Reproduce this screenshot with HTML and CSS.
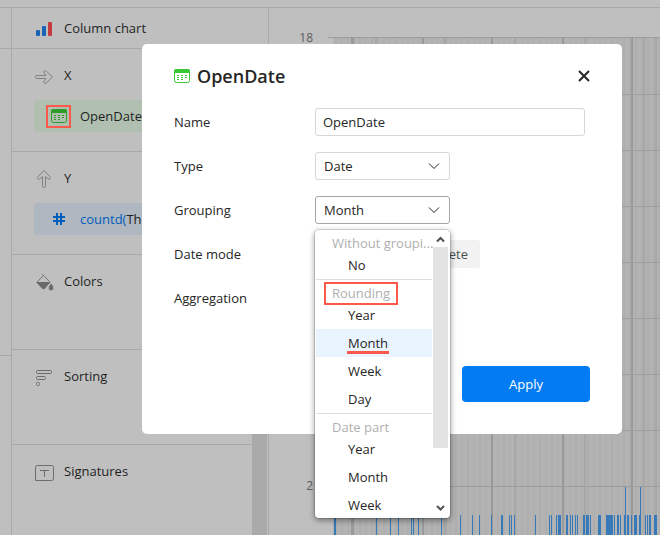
FILE: index.html
```html
<!DOCTYPE html>
<html lang="en">
<head>
<meta charset="utf-8">
<title>Field settings</title>
<link rel="stylesheet" href="styles.css">
</head>
<body>
<div class="workspace">
  <div class="rail"><div class="rail-top"></div><div class="rail-body"></div></div>
  <aside class="sidebar">
    <div class="sections">
      <div class="chart-type">
        <svg class="icon" width="20" height="20" viewBox="0 0 20 20"><rect x="2" y="12" width="4" height="6" rx="1" fill="#1a63b5"/><rect x="8" y="8" width="4" height="10" rx="1" fill="#1a63b5"/><rect x="14" y="4" width="4" height="14" rx="1" fill="#c63b40"/></svg>
        <span>Column chart</span>
      </div>
      <section class="section">
        <div class="section-head">
          <svg class="icon" width="20" height="20" viewBox="0 0 20 20" fill="none" stroke="#808080"><path d="M2.500 13.500q-1-.2-1-1.500t1-1.500h9.500L10 7.800q-.6-1.300.3-1.900t1.900.2L18.500 12l-6.300 6q-1 .8-1.900.2t-.3-1.900l2-2.800z"/></svg>
          <span>X</span>
        </div>
        <div class="field field-date">
          <span class="mark-box"><svg width="16" height="14" viewBox="0 0 16 14"><rect x=".5" y=".5" width="15" height="13" rx="2" fill="none" stroke="#2d9b28"/><path fill="#2d9b28" d="M0 4V2q0-2 2-2h12q2 0 2 2v2zM3 8h2v1H3zm0-2h2v1H3zm4 0h2v1H7zm4 0h2v1h-2zM7 8h2v1H7zm4 0h2v1h-2zM3 10h2v1H3zm4 0h2v1H7z"/></svg></span>
          <span>OpenDate</span>
        </div>
      </section>
      <section class="section">
        <div class="section-head">
          <svg class="icon" width="20" height="20" viewBox="0 0 20 20" fill="none" stroke="#808080"><path d="M8.500 18.500q.2 1 1.500 1t1.500-1V8.500L14.200 11q1.300.6 1.900-.3t-.2-1.900L10 2.500l-6 6.300q-.8 1-.2 1.900t1.900.3l2.800-2.500z"/></svg>
          <span>Y</span>
        </div>
        <div class="field field-measure">
          <span class="hash"><svg width="12" height="12" viewBox="0 0 12 12"><path fill="none" stroke="#005dbb" stroke-width="2" d="M4 0v12M8 0v12M0 4h12M0 8h12"/></svg></span>
          <span><span class="fn">countd(</span>The</span>
        </div>
      </section>
      <section class="section">
        <div class="section-head">
          <svg class="icon" width="20" height="20" viewBox="0 0 20 20"><path d="M8 3l8 8M9.500 4.500L3 11" fill="none" stroke="#777"/><path d="M2 11h14.500L11 17.500q-1.500 1.500-3 0z" fill="#696969"/><path d="M17 12q3 3.500 2.500 5a2.500 2.500 0 0 1-5 0q0-1.500 2.500-5z" fill="#696969" stroke="#bfbfbf" stroke-width=".5"/></svg>
          <span>Colors</span>
        </div>
      </section>
      <section class="section">
        <div class="section-head">
          <svg class="icon" width="20" height="20" viewBox="0 0 20 20" fill="none" stroke="#6c6c6c"><rect x="2.500" y="4.500" width="15" height="3" rx="1"/><rect x="2.500" y="10.500" width="9" height="3" rx="1"/><rect x="2.500" y="16.500" width="3" height="3" rx="1"/></svg>
          <span>Sorting</span>
        </div>
      </section>
      <section class="section">
        <div class="section-head">
          <svg class="icon" width="20" height="20" viewBox="0 0 20 20" fill="none" stroke="#6c6c6c"><path d="M1.500 19.500v-13q0-2 2-2h14q2 0 2 2v11q0 2-2 2z"/><path d="M6 9.500h9M10.500 9.500V16"/></svg>
          <span>Signatures</span>
        </div>
      </section>
    </div>
    <div class="side-scroll"></div>
  </aside>
  <main class="chart">
    <svg class="plot" role="img" aria-label="Column chart">
      <defs>
        <pattern id="stripes" width="6" height="8" patternUnits="userSpaceOnUse"><rect width="6" height="8" fill="#b3b3b3"/><rect width="2" height="8" fill="#aeaeae"/></pattern>
      </defs>
      <rect x="64" y="30" width="100%" height="100%" fill="url(#stripes)"/>
      <g fill="#999">
        <rect x="82" y="30" width="3" height="100%"/><rect x="153" y="30" width="2" height="100%"/><rect x="222" y="30" width="2" height="100%"/><rect x="293" y="30" width="2" height="100%"/><rect x="362" y="30" width="2" height="100%"/>
      </g>
      <g fill="#a7a7a7">
        <rect x="106" y="30" width="2" height="100%"/><rect x="174" y="30" width="4" height="100%"/><rect x="245" y="30" width="2" height="100%"/><rect x="315" y="30" width="2" height="100%"/><rect x="374" y="30" width="2" height="100%"/><rect x="386" y="30" width="2" height="100%"/>
      </g>
      <path stroke="#9d9d9d" d="M59 29.500h2000M59 86.500h2000M59 142.500h2000M59 198.500h2000M59 254.500h2000M59 310.500h2000M59 366.500h2000M59 422.500h2000M59 478.500h2000"/>
      <path fill="#3779b9" d="M65 507h2v40h-2zM107 507h1v40h-1zM121 507h1v40h-1zM129 507h1v40h-1zM142 507h1v40h-1zM144 507h1v40h-1zM149 507h1v40h-1zM172 507h1v40h-1zM191 507h1v40h-1zM203 507h1v40h-1zM210 507h1v40h-1zM222 507h1v40h-1zM232 507h2v40h-2zM240 507h1v40h-1zM242 507h1v40h-1zM245 507h1v40h-1zM266 507h1v40h-1zM280 507h1v40h-1zM282 507h1v40h-1zM287 507h1v40h-1zM289 507h3v40h-3zM297 507h2v40h-2zM301 507h1v40h-1zM303 507h1v40h-1zM306 507h1v40h-1zM308 507h1v40h-1zM314 507h2v40h-2zM317 507h3v40h-3zM321 507h1v40h-1zM329 507h3v40h-3zM337 507h7v40h-7zM345 507h1v40h-1zM348 507h2v40h-2zM351 507h1v40h-1zM355 507h2v40h-2zM358 507h2v40h-2zM362 507h1v40h-1zM365 507h3v40h-3zM370 507h2v40h-2zM376 507h1v40h-1zM378 507h1v40h-1zM380 507h2v40h-2zM385 507h3v40h-3zM356 479h1v68h-1zM371 479h1v68h-1z"/>
      <g class="axis"><text x="44" y="34" text-anchor="end">18</text><text x="44" y="482" text-anchor="end">2</text></g>
    </svg>
  </main>
</div>

<form class="dialog" role="dialog" aria-labelledby="dialog-title">
  <header class="dialog-head">
    <svg width="16" height="14" viewBox="0 0 16 14"><rect x=".5" y=".5" width="15" height="13" rx="2" fill="none" stroke="#3bc935"/><path fill="#3bc935" d="M0 4V2q0-2 2-2h12q2 0 2 2v2zM3 8h2v1H3zm0-2h2v1H3zm4 0h2v1H7zm4 0h2v1h-2zM7 8h2v1H7zm4 0h2v1h-2zM3 10h2v1H3zm4 0h2v1H7z"/></svg>
    <h1 id="dialog-title">OpenDate</h1>
    <button class="close" type="button" aria-label="Close"><svg width="12" height="12" viewBox="0 0 12 12"><path d="M1 1l10 10M11 1L1 11" stroke="#262626" stroke-width="2"/></svg></button>
  </header>
  <div class="rows">
    <div class="row"><label for="name">Name</label><input id="name" class="control" type="text" value="OpenDate"></div>
    <div class="row"><label for="type">Type</label>
      <div class="picker"><select id="type" class="control"><option>Date</option></select><svg class="chevron" width="12" height="6" viewBox="0 0 12 6"><path d="M1 .5l5 5 5-5" fill="none" stroke="#222"/></svg></div></div>
    <div class="row"><label for="grouping">Grouping</label>
      <div class="picker"><select id="grouping" class="control control-open"><option>Month</option></select><svg class="chevron" width="12" height="6" viewBox="0 0 12 6"><path d="M1 .5l5 5 5-5" fill="none" stroke="#222"/></svg>
        <div class="menu">
          <div class="menu-list" role="listbox" aria-label="Grouping">
            <div class="group">Without groupi...</div>
            <div class="item" role="option">No</div>
            <div class="group"><span class="mark-group">Rounding</span></div>
            <div class="item" role="option">Year</div>
            <div class="item selected" role="option" aria-selected="true"><span class="mark-line">Month</span></div>
            <div class="item" role="option">Week</div>
            <div class="item" role="option">Day</div>
            <div class="group">Date part</div>
            <div class="item" role="option">Year</div>
            <div class="item" role="option">Month</div>
            <div class="item" role="option">Week</div>
          </div>
          <div class="menu-scroll">
            <svg width="15" height="17" viewBox="0 0 15 17"><path d="M4 11.500L7.500 8l3.500 3.500" fill="none" stroke="#505050" stroke-width="2"/></svg>
            <div class="thumb"></div>
            <svg width="15" height="17" viewBox="0 0 15 17"><path d="M4 5L7.500 8.500 11 5" fill="none" stroke="#505050" stroke-width="2"/></svg>
          </div>
        </div>
      </div></div>
    <div class="row"><span>Date mode</span><button class="mode" type="button">Discrete</button></div>
    <div class="row"><span>Aggregation</span></div>
  </div>
  <button class="apply" type="button">Apply</button>
</form>
</body>
</html>
```
FILE: styles.css
```css
* { box-sizing: border-box; }

body {
  margin: 0;
  background: #bfbfbf;
  color: #1f1f1f;
  font: 13px/20px "Open Sans", "Noto Sans", sans-serif;
  overflow: hidden;
}

svg { display: block; flex: none; }

button, input, select { font: inherit; color: inherit; }

.workspace {
  display: flex;
  height: 100vh;
  padding-top: 7px;
}

.rail, .sidebar, .chart { border-top: 1px solid #a9a9a9; }

.rail {
  width: 12px;
  flex: none;
  border-right: 1px solid #a9a9a9;
}

.rail-top { height: 41px; border-bottom: 1px solid #a9a9a9; }
.rail-body { height: 307px; border-bottom: 1px solid #a9a9a9; }

.sidebar {
  display: flex;
  flex: none;
  width: 257px;
  border-right: 1px solid #a9a9a9;
}

.sections { flex: 1; min-width: 0; overflow: hidden; }

.side-scroll { width: 15px; margin: 41px 1px 0 0; background: #aaa; }

.chart-type, .section-head {
  display: flex;
  align-items: center;
  gap: 10px;
  padding-left: 22px;
}

.chart-type {
  height: 41px;
  border-bottom: 1px solid #a9a9a9;
}

.section {
  min-height: 95px;
  padding-top: 14px;
  border-bottom: 1px solid #a9a9a9;
}

.section:last-child { border-bottom: 0; }

.section-head { height: 24px; }

.field {
  display: flex;
  align-items: center;
  gap: 9px;
  height: 32px;
  margin: 13px 12px 19px 22px;
  padding-left: 12px;
  border-radius: 3px;
}

.field-date { background: #b0bfb0; }
.field-measure { background: #afb7c1; }
.fn { color: #005dbb; }

.mark-box, .hash {
  display: flex;
  align-items: center;
  justify-content: center;
  width: 25px;
  height: 23px;
}

.mark-box { border: 2px solid #fb5a4b; }

.chart { flex: 1; min-width: 0; }
.plot { width: 100%; height: 100%; }
.axis { fill: #5c5c5c; font-size: 12px; }

.dialog {
  position: absolute;
  top: 44px;
  left: 142px;
  width: 480px;
  padding: 20px 32px 32px;
  border-radius: 5px;
  background: #fff;
  color: #262626;
}

.dialog-head {
  display: flex;
  align-items: center;
  gap: 7px;
  height: 24px;
  margin-bottom: 20px;
}

.dialog-head h1 {
  margin: 0;
  font-size: 18px;
  line-height: 24px;
  font-weight: 600;
}

.close {
  margin-left: auto;
  padding: 0;
  border: 0;
  background: none;
}

.rows { display: grid; gap: 16px; }

.row {
  display: grid;
  grid-template-columns: 141px 1fr;
  align-items: center;
  height: 28px;
}

.control {
  display: block;
  width: 100%;
  height: 28px;
  padding: 0 8px;
  border: 1px solid #d6d6d6;
  border-radius: 3px;
  background: #fff;
  appearance: none;
  outline: 0;
}

input.control { width: 270px; padding: 0 7px; }
.control-open { border-color: #a6a6a6; }

.picker { position: relative; width: 135px; }

.chevron {
  position: absolute;
  top: 11px;
  right: 10px;
  pointer-events: none;
}

.menu {
  position: absolute;
  top: 34px;
  left: 0;
  z-index: 1;
  display: flex;
  width: 100%;
  height: 288px;
  padding: 0 2px 0 1px;
  border-radius: 4px;
  background: #fff;
  box-shadow: 0 0 0 1px rgba(0, 0, 0, .12), 0 2px 6px rgba(0, 0, 0, .45);
  overflow: hidden;
}

.menu-list { flex: 1; min-width: 0; margin-right: 1px; }

.group {
  height: 22px;
  padding: 5px 0 0 16px;
  border-top: 1px solid #dedede;
  color: #b0b0b0;
  line-height: 16px;
  white-space: nowrap;
}

.group:first-child {
  height: 21px;
  border-top: 0;
}

.item {
  height: 28px;
  padding-left: 32px;
  line-height: 28px;
}

.selected { background: #eaf4fe; }

.mark-group {
  position: relative;
  display: inline-block;
}

.mark-group::after {
  content: "";
  position: absolute;
  inset: -3px -8px -4px;
  border: 2px solid #fb5a4b;
}

.mark-line { position: relative; display: inline-block; }

.mark-line::after {
  content: "";
  position: absolute;
  left: -1px;
  right: -1px;
  bottom: 3px;
  height: 3px;
  background: #fb5a4b;
}

.menu-scroll {
  display: flex;
  flex-direction: column;
  width: 15px;
}

.thumb { height: 201px; margin-bottom: auto; background: #e3e3e3; }

.mode {
  width: 165px;
  height: 28px;
  padding: 0 12px;
  border: 0;
  border-radius: 3px;
  background: #f2f2f2;
  color: #4d4d4d;
  text-align: right;
}

.apply {
  display: block;
  width: 128px;
  height: 36px;
  margin: 54px 0 0 auto;
  border: 0;
  border-radius: 4px;
  background: #027bf3;
  color: #fff;
}
```
